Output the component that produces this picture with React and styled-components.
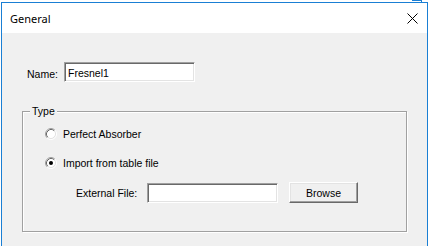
import React from "react";
import styled, { createGlobalStyle } from "styled-components";

const GlobalStyle = createGlobalStyle`
  html, body { margin: 0; padding: 0; background: #ffffff; }
  #root { width: 429px; height: 246px; }
`;

const Page = styled.div`
  position: relative;
  width: 429px;
  height: 246px;
  overflow: hidden;
  background: #ffffff;
  padding: 2px 0 0 1px;
  box-sizing: border-box;
`;

const Hook = styled.div`
  position: absolute;
  top: 0;
  left: 412px;
  width: 9px;
  height: 2px;
  border-top: 1px solid #1a7fd4;
  border-right: 1px solid #1a7fd4;
`;

const Window = styled.div`
  width: 427px;
  height: 260px;
  box-sizing: border-box;
  border: 1px solid #1a7fd4;
  border-bottom: none;
  display: flex;
  flex-direction: column;
  background: #f0f0f0;
`;

const TitleBar = styled.div`
  height: 30px;
  flex: none;
  background: #ffffff;
  display: flex;
  align-items: center;
  justify-content: space-between;
  padding-left: 8px;
`;

const Title = styled.span`
  font-family: "Noto Sans", "Open Sans", sans-serif;
  font-size: 11px;
  color: #000000;
`;

const CloseButton = styled.div`
  width: 29px;
  height: 30px;
  display: flex;
  align-items: center;
  justify-content: center;
`;

const Content = styled.div`
  flex: 1;
  display: flex;
  flex-direction: column;
  align-items: flex-start;
  padding: 29px 0 0 20px;
  font-family: "Liberation Sans", Arial, sans-serif;
  font-size: 10.5px;
  color: #000000;
`;

const NameRow = styled.div`
  display: flex;
  align-items: center;
  padding-left: 5px;
`;

const Label = styled.span`
  width: ${(p) => p.$width}px;
  padding-top: ${(p) => p.$shift || 0}px;
  white-space: nowrap;
`;

const TextField = styled.div`
  width: ${(p) => p.$width}px;
  height: 20px;
  box-sizing: border-box;
  background: #ffffff;
  border-style: solid;
  border-width: 1px;
  border-color: #a0a0a0 #ffffff #ffffff #a0a0a0;
  box-shadow: inset 1px 1px 0 #696969, inset -1px -1px 0 #e3e3e3;
  padding: 1px 0 0 3px;
  display: flex;
  align-items: center;
  white-space: nowrap;
`;

const GroupBox = styled.div`
  position: relative;
  margin-top: 29px;
  width: 385px;
  height: 121px;
  box-sizing: border-box;
  border: 1px solid #a0a0a0;
  box-shadow: inset 1px 1px 0 #ffffff, 1px 1px 0 #ffffff;
  padding: 16px 0 0 22px;
  display: flex;
  flex-direction: column;
  gap: 17px;
`;

const Legend = styled.span`
  position: absolute;
  top: -8px;
  left: 7px;
  padding: 0 2px;
  background: #f0f0f0;
  line-height: 14px;
`;

const RadioRow = styled.div`
  display: flex;
  align-items: center;
  height: 12px;
  gap: 6px;
`;

const FileRow = styled.div`
  display: flex;
  align-items: center;
  margin-top: -4px;
  padding-left: 31px;
`;

const Button = styled.div`
  margin-left: 11px;
  width: 69px;
  height: 21px;
  box-sizing: border-box;
  border-style: solid;
  border-width: 1px;
  border-color: #ffffff #696969 #696969 #ffffff;
  box-shadow: inset -1px -1px 0 #a0a0a0, inset 1px 1px 0 #e3e3e3;
  background: #f0f0f0;
  display: flex;
  align-items: center;
  justify-content: center;
  padding-top: 1px;
`;

function Radio({ checked }) {
  return (
    <svg width="12" height="12" viewBox="0 0 12 12">
      <circle cx="6" cy="6" r="4.5" fill="#ffffff" />
      <path d="M2.11 9.89 A5.5 5.5 0 0 1 9.89 2.11" fill="none" stroke="#a0a0a0" />
      <path d="M9.89 2.11 A5.5 5.5 0 0 1 2.11 9.89" fill="none" stroke="#ffffff" />
      <path d="M2.82 9.18 A4.5 4.5 0 0 1 9.18 2.82" fill="none" stroke="#696969" />
      <path d="M9.18 2.82 A4.5 4.5 0 0 1 2.82 9.18" fill="none" stroke="#e3e3e3" />
      {checked && <circle cx="6" cy="6" r="2" fill="#000000" />}
    </svg>
  );
}

export default function App() {
  return (
    <>
      <GlobalStyle />
      <Page>
        <Hook />
        <Window>
          <TitleBar>
            <Title>General</Title>
            <CloseButton>
              <svg width="11" height="11" viewBox="0 0 11 11">
                <path d="M0.5 0.5 L10.5 10.5 M10.5 0.5 L0.5 10.5" stroke="#000000" strokeWidth="1" fill="none" />
              </svg>
            </CloseButton>
          </TitleBar>
          <Content>
            <NameRow>
              <Label $width={37} $shift={3}>Name:</Label>
              <TextField $width={131}>Fresnel1</TextField>
            </NameRow>
            <GroupBox>
              <Legend>Type</Legend>
              <RadioRow>
                <Radio />
                <span>Perfect Absorber</span>
              </RadioRow>
              <RadioRow>
                <Radio checked />
                <span>Import from table file</span>
              </RadioRow>
              <FileRow>
                <Label $width={71}>External File:</Label>
                <TextField $width={131} />
                <Button>Browse</Button>
              </FileRow>
            </GroupBox>
          </Content>
        </Window>
      </Page>
    </>
  );
}
